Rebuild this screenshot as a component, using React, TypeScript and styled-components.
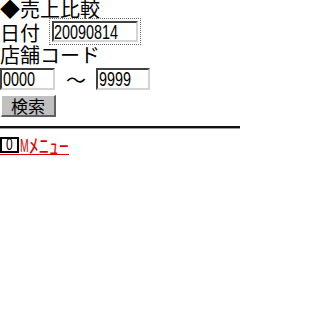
import React from "react";
import styled, { createGlobalStyle } from "styled-components";

const Global = createGlobalStyle`
  html, body { margin: 0; padding: 0; background: #fff; }
  body {
    font-family: "Noto Sans CJK JP", "DejaVu Sans", sans-serif;
    color: #000;
    width: 240px;
    height: 320px;
    overflow: hidden;
  }
`;

const Page = styled.div`
  display: flex;
  flex-direction: column;
  width: 240px;
`;

const Label = styled.div<{ $h: number; $lh: number }>`
  height: ${(p) => p.$h}px;
  font-size: 20px;
  line-height: ${(p) => p.$lh}px;
  white-space: nowrap;
`;

const Row = styled.div<{ $h: number; $gap: number }>`
  display: flex;
  align-items: flex-start;
  height: ${(p) => p.$h}px;
  gap: ${(p) => p.$gap}px;
`;

const InlineLabel = styled.span`
  font-size: 20px;
  line-height: 22px;
  padding-top: 4px;
  white-space: nowrap;
`;

const Focus = styled.div`
  border: 1px dotted #6a6a6a;
  padding: 2px;
  display: flex;
`;

const Field = styled.div<{ $w: number; $h: number; $lh: number; $pl: number }>`
  width: ${(p) => p.$w}px;
  height: ${(p) => p.$h}px;
  box-sizing: border-box;
  border-top: 2px solid #404040;
  border-left: 2px solid #404040;
  border-right: 2px solid #d4d4d4;
  border-bottom: 2px solid #d4d4d4;
  background: #fff;
  line-height: ${(p) => p.$lh}px;
  padding-left: ${(p) => p.$pl}px;
  white-space: nowrap;
`;

/* Tall, narrow digits like the handset's bitmap font: Liberation Sans squeezed
   horizontally; the negative right margin gives back the width the squeeze frees. */
const Digits = styled.span<{ $size: number; $n: number }>`
  display: inline-block;
  font-family: "Liberation Sans", "DejaVu Sans", sans-serif;
  font-size: ${(p) => p.$size}px;
  transform: scaleX(0.72);
  transform-origin: left center;
  margin-right: ${(p) => -(p.$n * 0.556 * 0.28).toFixed(3)}em;
  white-space: nowrap;
`;

const Tilde = styled.span`
  font-size: 20px;
  line-height: 22px;
  width: 19px;
  text-align: center;
  padding-top: 1px;
`;

const Button = styled.div`
  margin-left: 1px;
  width: 55px;
  height: 22px;
  box-sizing: border-box;
  background: #c0c0c0;
  border-top: 1px solid #fff;
  border-left: 1px solid #fff;
  border-right: 2px solid #606060;
  border-bottom: 2px solid #606060;
  display: flex;
  align-items: center;
  justify-content: center;
  font-size: 17px;
  line-height: 19px;
`;

const Rule = styled.div`
  margin-top: 9px;
  width: 240px;
  height: 0;
  border-top: 2px solid #111;
  border-bottom: 1px solid #9a9a9a;
`;

const MenuLink = styled.a`
  margin-top: 8px;
  display: inline-flex;
  align-items: flex-start;
  align-self: flex-start;
  color: #e00000;
  text-decoration: none;
  border-bottom: 1px solid #e00000;
  height: 17px;
`;

const KeyBox = styled.span`
  display: flex;
  align-items: center;
  justify-content: center;
  width: 19px;
  height: 16px;
  box-sizing: border-box;
  border: 2px solid #000;
  color: #000;
  font-size: 16px;
  line-height: 12px;
`;

const KeyDigit = styled.span`
  display: inline-block;
  font-family: "Liberation Sans", "DejaVu Sans", sans-serif;
  font-size: 16px;
  line-height: 12px;
  transform: scaleX(0.75);
`;

const LinkText = styled.span`
  display: inline-flex;
  align-items: flex-start;
  font-size: 20px;
  line-height: 17px;
  padding-left: 1px;
  white-space: nowrap;
`;

const NarrowLatin = styled.span`
  display: inline-block;
  font-family: "Liberation Sans", sans-serif;
  font-size: 19px;
  transform: scaleX(0.55);
  transform-origin: left center;
  margin-right: -0.375em;
`;

export default function App() {
  return (
    <Page>
      <Global />
      <Label $h={18} $lh={18}>◆売上比較</Label>
      <Row $h={26} $gap={9}>
        <InlineLabel>日付</InlineLabel>
        <Focus>
          <Field $w={86} $h={21} $lh={19} $pl={0}>
            <Digits $size={20} $n={8}>20090814</Digits>
          </Field>
        </Focus>
      </Row>
      <Label $h={24} $lh={22}>店舗コード</Label>
      <Row $h={27} $gap={11}>
        <Field $w={55} $h={22} $lh={18} $pl={1}>
          <Digits $size={20} $n={4}>0000</Digits>
        </Field>
        <Tilde>〜</Tilde>
        <Field $w={54} $h={22} $lh={18} $pl={1}>
          <Digits $size={20} $n={4}>9999</Digits>
        </Field>
      </Row>
      <Button>検索</Button>
      <Rule />
      <MenuLink href="#">
        <KeyBox>
          <KeyDigit>0</KeyDigit>
        </KeyBox>
        <LinkText>
          <NarrowLatin>M</NarrowLatin>ﾒﾆｭｰ
        </LinkText>
      </MenuLink>
    </Page>
  );
}
